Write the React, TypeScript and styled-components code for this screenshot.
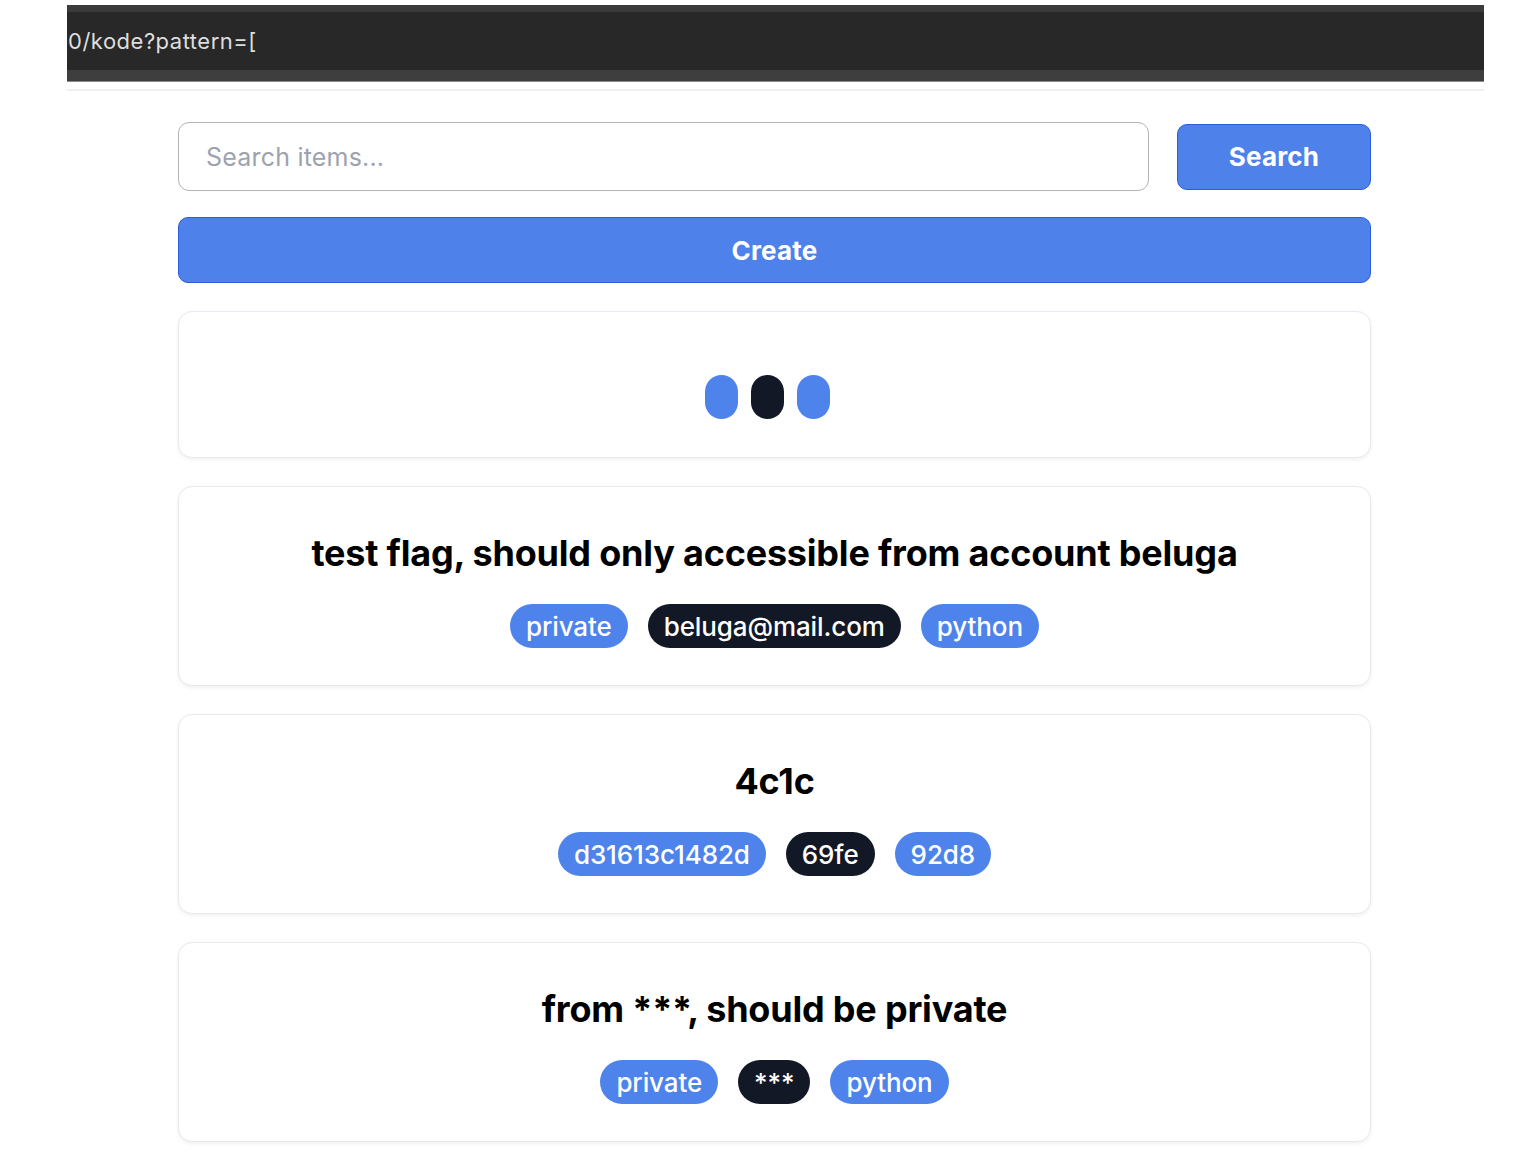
import React from "react";
import styled, { createGlobalStyle } from "styled-components";

const Global = createGlobalStyle`
  html, body { margin: 0; padding: 0; background: #ffffff; }
  body { font-family: Inter, "Noto Sans", "Liberation Sans", sans-serif; }
  * { box-sizing: border-box; }
`;

const Page = styled.div`
  width: 1417px;
  margin-left: 67px;
  padding-top: 5px;
  padding-bottom: 20px;
`;

const UrlBar = styled.div`
  height: 76px;
  background: #282828;
  border-top: 7px solid #3b3b3b;
  border-bottom: 11px solid #3e3e3e;
  box-shadow: 0 1px 0 #8a8a8a;
  display: flex;
  align-items: center;
  color: #dedede;
  font-family: Inter, "Liberation Sans", sans-serif;
  font-size: 22px;
  letter-spacing: 0.5px;
  padding-left: 1px;
`;

const Rule = styled.div`
  height: 2px;
  background: #efefef;
  margin-top: 8px;
`;

const Content = styled.div`
  padding: 31px 113px 0 111px;
  display: flex;
  flex-direction: column;
`;

const SearchRow = styled.div`
  display: flex;
  gap: 28px;
  align-items: center;
`;

const SearchInput = styled.input`
  flex: 1;
  height: 69px;
  border: 1.5px solid #b4b4b4;
  border-radius: 11px;
  padding: 0 27px;
  font-family: Inter, "Liberation Sans", sans-serif;
  font-size: 25px;
  letter-spacing: 0.2px;
  color: #111;
  outline: none;
  &::placeholder { color: #9ca3af; }
`;

const BlueButton = styled.button<{ $wide?: boolean }>`
  width: ${(p) => (p.$wide ? "100%" : "194px")};
  height: 66px;
  background: #4f81ea;
  border: 1.5px solid #2d5bd9;
  border-radius: 10px;
  color: #ffffff;
  font-family: Inter, "Liberation Sans", sans-serif;
  font-weight: 700;
  font-size: 26px;
  letter-spacing: 0.2px;
  cursor: pointer;
`;

const CreateWrap = styled.div`
  margin-top: 26px;
`;

const Card = styled.div<{ $loading?: boolean }>`
  margin-top: 28px;
  background: #fff;
  border: 1.5px solid #e8e9ee;
  border-radius: 14px;
  box-shadow: 0 2px 4px rgba(17, 24, 39, 0.06);
  display: flex;
  flex-direction: column;
  align-items: center;
  padding: ${(p) => (p.$loading ? "63px 0 38px" : "38px 24px 37px")};
`;

const Dots = styled.div`
  display: flex;
  gap: 13px;
  margin-right: 14px;
`;

const Dot = styled.div<{ $dark?: boolean }>`
  width: 33px;
  height: 44px;
  border-radius: 999px;
  background: ${(p) => (p.$dark ? "#121826" : "#4f83ec")};
`;

const Title = styled.h2`
  margin: 0;
  font-family: Inter, "Liberation Sans", sans-serif;
  font-weight: 700;
  font-size: 36px;
  line-height: 56px;
  letter-spacing: -0.2px;
  color: #000;
  text-align: center;
`;

const Tags = styled.div`
  display: flex;
  gap: 20px;
  margin-top: 23px;
  justify-content: center;
`;

const Tag = styled.span<{ $dark?: boolean }>`
  height: 44px;
  display: inline-flex;
  align-items: center;
  padding: 0 16px;
  border-radius: 999px;
  background: ${(p) => (p.$dark ? "#121826" : "#4f83ec")};
  color: #fff;
  font-family: Inter, "Liberation Sans", sans-serif;
  font-size: 26px;
  font-weight: 500;
  letter-spacing: -0.1px;
`;

const items = [
  {
    title: "test flag, should only accessible from account beluga",
    tags: ["private", "beluga@mail.com", "python"],
  },
  { title: "4c1c", tags: ["d31613c1482d", "69fe", "92d8"] },
  { title: "from ***, should be private", tags: ["private", "***", "python"] },
];

export default function App() {
  return (
    <>
      <Global />
      <Page>
        <UrlBar>0/kode?pattern=[</UrlBar>
        <Rule />
        <Content>
          <SearchRow>
            <SearchInput placeholder="Search items..." />
            <BlueButton>Search</BlueButton>
          </SearchRow>
          <CreateWrap>
            <BlueButton $wide>Create</BlueButton>
          </CreateWrap>
          <Card $loading>
            <Dots>
              <Dot />
              <Dot $dark />
              <Dot />
            </Dots>
          </Card>
          {items.map((it) => (
            <Card key={it.title}>
              <Title>{it.title}</Title>
              <Tags>
                {it.tags.map((t, i) => (
                  <Tag key={i} $dark={i === 1}>
                    {t}
                  </Tag>
                ))}
              </Tags>
            </Card>
          ))}
        </Content>
      </Page>
    </>
  );
}
